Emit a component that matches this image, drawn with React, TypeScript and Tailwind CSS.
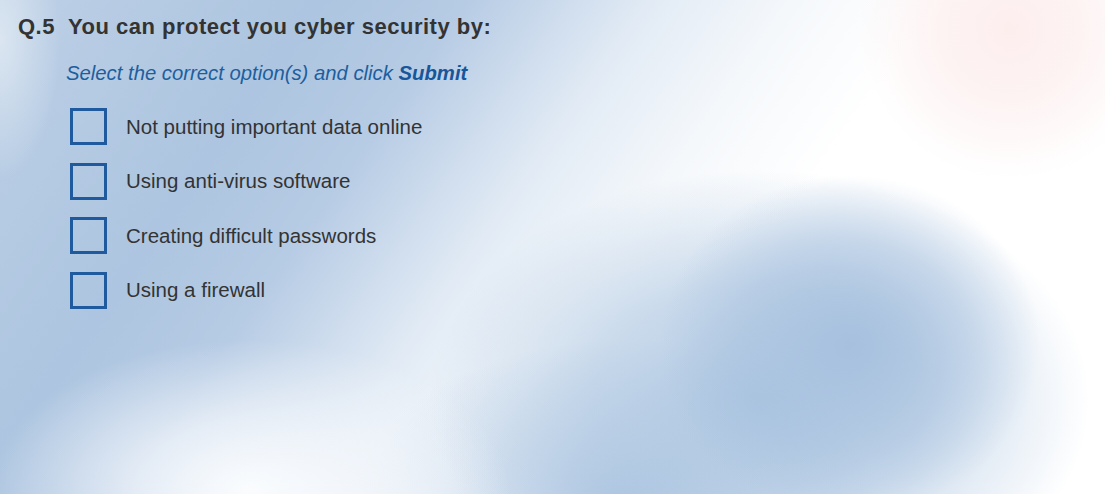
import React from "react";

const options = [
  "Not putting important data online",
  "Using anti-virus software",
  "Creating difficult passwords",
  "Using a firewall",
];

export default function App() {
  return (
    <div
      className="w-[1105px] h-[494px] overflow-hidden bg-[#ffffff] [background-image:radial-gradient(circle_at_1010px_30px,rgba(253,238,238,1)_0px,rgba(253,240,240,0.8)_70px,rgba(255,255,255,0)_150px),radial-gradient(ellipse_260px_150px_at_250px_490px,rgba(250,252,254,1)_0%,rgba(245,248,252,0.7)_45%,rgba(245,248,252,0)_100%),radial-gradient(ellipse_190px_170px_at_850px_345px,rgba(166,192,222,1)_0%,rgba(166,192,222,0.5)_60%,rgba(166,192,222,0)_100%),radial-gradient(ellipse_330px_230px_at_760px_400px,rgba(170,196,224,0.95)_0%,rgba(170,196,224,0.6)_50%,rgba(170,196,224,0)_100%),radial-gradient(ellipse_260px_160px_at_620px_500px,rgba(168,194,223,0.9)_0%,rgba(168,194,223,0)_100%),radial-gradient(ellipse_60px_140px_at_0px_40px,rgba(222,232,242,0.9)_0%,rgba(222,232,242,0)_100%),linear-gradient(125deg,#bdd0e6_0%,#adc5e0_22%,#b6cbe4_32%,#e2ebf5_45%,#f5f8fb_55%,#ffffff_65%,#ffffff_100%)]"
      style={{ fontFamily: '"Liberation Sans", Arial, sans-serif' }}
    >
      <div className="flex flex-col pl-[18px] pt-[13px]">
        <div className="flex items-baseline text-[22px] font-bold text-[#333333] leading-[28px] tracking-[0.5px]">
          <span className="w-[50px]">Q.5</span>
          <span>You can protect you cyber security by:</span>
        </div>
        <div className="pl-[48px] mt-[19px] text-[20.3px] italic text-[#1d5f9e] leading-[26px]">
          Select the correct option(s) and click{" "}
          <span className="font-bold text-[#17569a]">Submit</span>
        </div>
        <div className="flex flex-col gap-[17.5px] pl-[52px] mt-[22px]">
          {options.map((o) => (
            <div key={o} className="flex items-center gap-[19px]">
              <div className="w-[37px] h-[37px] border-[3px] border-[#1f5a9e] shrink-0" />
              <span className="text-[20.5px] text-[#333333] leading-[24px]">{o}</span>
            </div>
          ))}
        </div>
      </div>
    </div>
  );
}
